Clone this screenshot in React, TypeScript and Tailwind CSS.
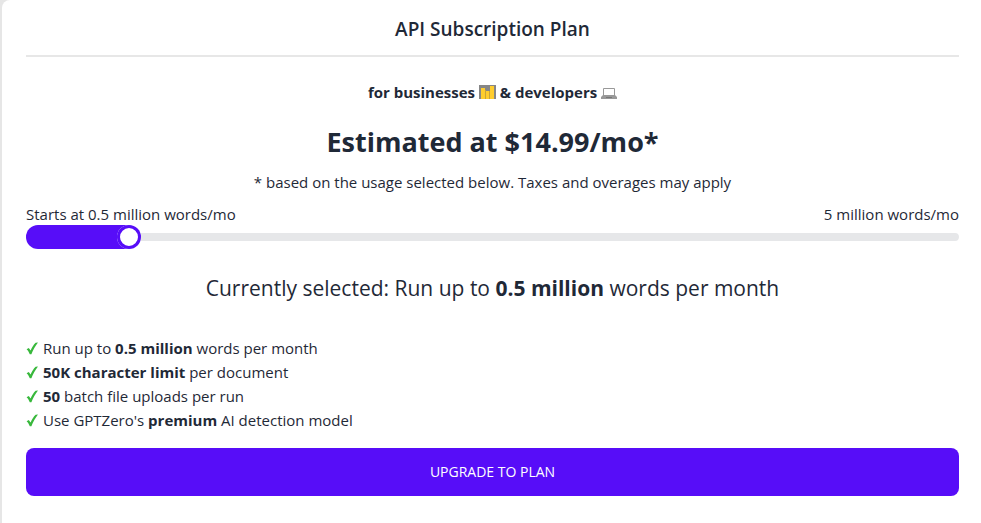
import { useState } from 'react';

const FEATURES = [
  { before: 'Run up to ', bold: '0.5 million', after: ' words per month' },
  { before: '', bold: '50K character limit', after: ' per document' },
  { before: '', bold: '50', after: ' batch file uploads per run' },
  { before: "Use GPTZero's ", bold: 'premium', after: ' AI detection model' },
];

function ChartIcon() {
  return (
    <svg viewBox="0 0 17 14" className="inline-block w-[17px] h-[14px] align-[-1px]" role="img" aria-label="Chart">
      <path fill="#868686" d="M0 0h17v14H0z" />
      <path fill="#ffcd2e" d="M2 3h4v11H2zM7 6h3v8H7zM11 1h4v13h-4z" />
      <path fill="#c9a43a" d="M6 5h1v9H6zM10 6h1v8h-1z" />
    </svg>
  );
}

function LaptopIcon() {
  return (
    <svg viewBox="0 0 16 12" className="inline-block w-4 h-3 align-[-1px]" role="img" aria-label="Laptop">
      <path fill="#fff" stroke="#999" strokeWidth="1" d="M2.500 1.500h11v7h-11z" />
      <path fill="#999" d="M2 8h12l2 2v2H0v-2z" />
      <path fill="#777" d="M5 10h6v1H5z" />
    </svg>
  );
}

function CheckIcon() {
  return (
    <svg viewBox="0 0 12 13" className="w-3 h-[13px] shrink-0" aria-hidden="true">
      <path fill="#38b83c" d="M.6 7.200 2.800 6l1.800 2.600C5.900 5.400 7.600 2.800 9.600.8L12 .4C9.300 3.900 7.100 7.800 5.400 12.200H3.800C3.100 10.400 2 8.600.6 7.200z" />
    </svg>
  );
}

export default function App() {
  const [words, setWords] = useState(0.5);

  return (
    <div className="bg-[#e6e6e6] pl-[2px] font-['Open_Sans','Noto_Sans',sans-serif] text-[15px] leading-6 text-[#1f2937]">
      <main className="min-h-screen bg-white rounded-tl-lg pt-[15px] pb-6 pl-6 pr-[22px]">
        <h1 className="text-center text-[19px] leading-7 font-semibold">API Subscription Plan</h1>
        <hr className="mt-3 border-0 h-[2px] bg-[#e7e7e7]" />

        <div className="mt-[23px] text-center">
          <p className="font-bold">
            for businesses <ChartIcon /> &amp; developers <LaptopIcon />
          </p>
          <h2 className="mt-5 text-[27px] leading-9 font-bold">Estimated at $14.99/mo*</h2>
          <p className="mt-[10px]">* based on the usage selected below. Taxes and overages may apply</p>
        </div>

        <div className="mt-2">
          <div className="flex justify-between">
            <label htmlFor="words">Starts at 0.5 million words/mo</label>
            <span>5 million words/mo</span>
          </div>
          <input
            id="words"
            type="range"
            min="0"
            max="5"
            step="0.5"
            value={words}
            onChange={e => setWords(Math.max(0.5, Number(e.target.value)))}
            className="-mt-px block w-full h-6 appearance-none overflow-hidden rounded-full bg-transparent cursor-pointer [&::-webkit-slider-runnable-track]:h-2 [&::-webkit-slider-runnable-track]:rounded-full [&::-webkit-slider-runnable-track]:bg-[#e6e7e9] [&::-webkit-slider-thumb]:relative [&::-webkit-slider-thumb]:top-1/2 [&::-webkit-slider-thumb]:-translate-y-1/2 [&::-webkit-slider-thumb]:appearance-none [&::-webkit-slider-thumb]:size-6 [&::-webkit-slider-thumb]:rounded-full [&::-webkit-slider-thumb]:bg-white [&::-webkit-slider-thumb]:shadow-[0_0_0_3px_#570df8_inset,-1610px_0_0_1600px_#570df8]"
          />
        </div>

        <p className="mt-[23px] text-center text-[21px] leading-8">
          Currently selected: Run up to <strong>{words} million</strong> words per month
        </p>

        <ul className="mt-8">
          {FEATURES.map(feature => (
            <li key={feature.bold} className="flex items-center gap-[5px]">
              <CheckIcon />
              <span>
                {feature.before}
                <strong>{feature.bold}</strong>
                {feature.after}
              </span>
            </li>
          ))}
        </ul>

        <button
          type="button"
          className="mt-4 w-full h-12 rounded-lg bg-[#570df8] text-[14px] font-medium uppercase text-white cursor-pointer"
        >
          Upgrade to plan
        </button>
      </main>
    </div>
  );
}
